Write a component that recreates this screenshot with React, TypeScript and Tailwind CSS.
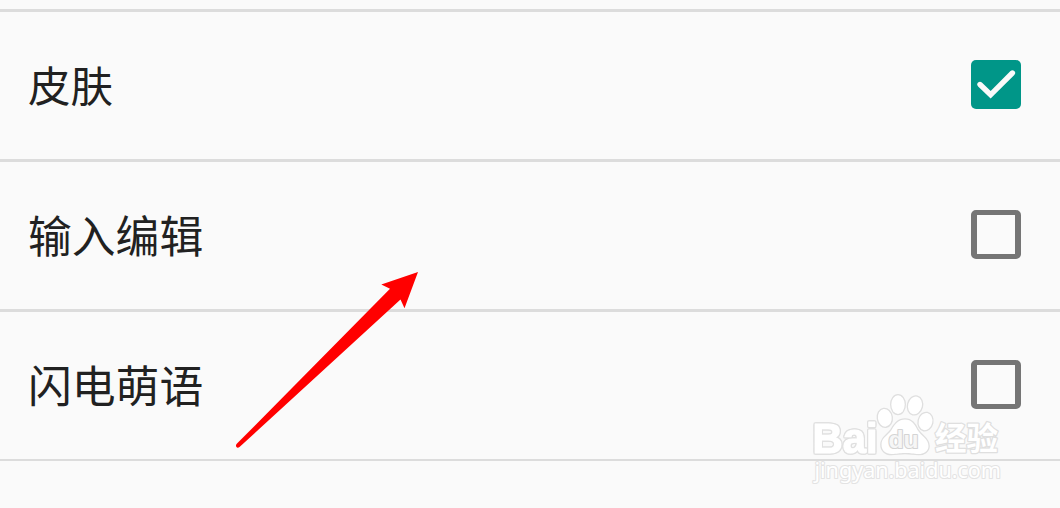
import React, { useState } from "react";

type Option = { label: string; checked: boolean; textClass: string };

const initialOptions: Option[] = [
  { label: "皮肤", checked: true, textClass: "text-[42.5px]" },
  { label: "输入编辑", checked: false, textClass: "text-[43.8px]" },
  { label: "闪电萌语", checked: false, textClass: "text-[43.8px]" },
];

function Checkbox({ checked, label, onToggle }: { checked: boolean; label: string; onToggle: () => void }) {
  return (
    <button
      type="button"
      role="checkbox"
      aria-checked={checked}
      aria-label={label}
      onClick={onToggle}
      className={
        checked
          ? "block h-[49px] w-[50px] rounded-[5px] bg-[#009688]"
          : "block h-[49px] w-[50px] rounded-[5px] border-x-[6px] border-y-[5px] border-[#757575]"
      }
    >
      {checked && (
        <svg viewBox="0 0 50 49" className="block h-[49px] w-[50px]" fill="none" stroke="#fafafa" strokeWidth="5.4" strokeLinecap="round">
          <path d="M9 24.500 L19.6 34.8 L41.400 13" />
        </svg>
      )}
    </button>
  );
}

function Arrow() {
  return (
    <svg viewBox="0 0 186 180" className="pointer-events-none absolute top-[270px] left-[234px] h-[180px] w-[186px]" fill="#ff0000">
      <path d="M184 2 L170.500 38.300 L166.500 29.500 L5.500 177 Q3.500 178.500 2.300 176.800 Q1.400 175.300 3 173.600 L156 18.800 L147.300 14.400 Z" />
    </svg>
  );
}

function Watermark() {
  return (
    <svg
      viewBox="806 388 202 104"
      className="pointer-events-none absolute top-[388px] left-[806px] h-[104px] w-[202px]"
      fill="#ffffff"
      stroke="#dfdfdf"
      strokeWidth="2.6"
      strokeLinejoin="round"
      paintOrder="stroke"
    >
      <text
        x="812.500"
        y="452.500"
        fontSize="42"
        fontWeight="700"
        textLength="65"
        lengthAdjust="spacingAndGlyphs"
        stroke="#ffffff"
        strokeWidth="1.200"
        className="font-['Liberation_Sans',sans-serif] [filter:drop-shadow(1px_0_0_#e0e0e0)_drop-shadow(-1px_0_0_#e0e0e0)_drop-shadow(0_1px_0_#e0e0e0)_drop-shadow(0_-1px_0_#e0e0e0)]"
      >
        Bai
      </text>
      <ellipse cx="884.800" cy="417.800" rx="6.900" ry="8.900" transform="rotate(-8 884.800 417.800)" />
      <ellipse cx="898" cy="404.600" rx="6.700" ry="9.300" />
      <ellipse cx="915" cy="405.400" rx="6.900" ry="9" transform="rotate(14 915 405.400)" />
      <ellipse cx="925.500" cy="421.600" rx="6.800" ry="8.700" transform="rotate(12 925.500 421.600)" />
      <path d="M905 419.500 C911.500 419.500 914.500 424 917.500 430 C921 436 928.500 438.500 928.500 446 C928.500 451.500 923.500 454 918.500 454 C913 454 911 453 905 453 C899 453 897 454 891.500 454 C885.500 454 881.500 450.500 881.500 444.500 C881.500 437.500 888 435.500 891.500 430 C895 424 898.500 419.500 905 419.500 Z" />
      <text x="888.500" y="448.300" fontSize="24" fontWeight="700" strokeWidth="2.200" textLength="30" lengthAdjust="spacingAndGlyphs" className="font-['Liberation_Sans',sans-serif]" stroke="#d4d4d4" fill="#f6f6f6">
        du
      </text>
      <text x="935" y="450.300" fontSize="32" fontWeight="700" textLength="63" lengthAdjust="spacingAndGlyphs" className="font-['Noto_Sans_CJK_SC',sans-serif]">
        经验
      </text>
      <text x="814.500" y="478" fontSize="22" fontWeight="400" strokeWidth="2.200" stroke="#e3e3e3" textLength="186.500" lengthAdjust="spacingAndGlyphs" className="font-['Noto_Sans',sans-serif]">
        jingyan.baidu.com
      </text>
    </svg>
  );
}

export default function App() {
  const [options, setOptions] = useState(initialOptions);
  const toggle = (index: number) =>
    setOptions((current) => current.map((o, i) => (i === index ? { ...o, checked: !o.checked } : o)));

  return (
    <main className="relative h-[508px] w-[1060px] overflow-hidden bg-[#fafafa] pt-[9px] font-['Noto_Sans_CJK_SC',sans-serif] text-[#212121]">
      <ul className="border-b-2 border-[#dcdcdc]">
        {options.map((option, index) => (
          <li key={option.label} className="flex h-[150px] items-start justify-between border-t-[3px] border-[#dcdcdc] pt-12 pr-[39px] pl-7">
            <span className={`-mt-2 leading-[64px] ${option.textClass}`}>{option.label}</span>
            <Checkbox checked={option.checked} label={option.label} onToggle={() => toggle(index)} />
          </li>
        ))}
      </ul>
      <Watermark />
      <Arrow />
    </main>
  );
}
